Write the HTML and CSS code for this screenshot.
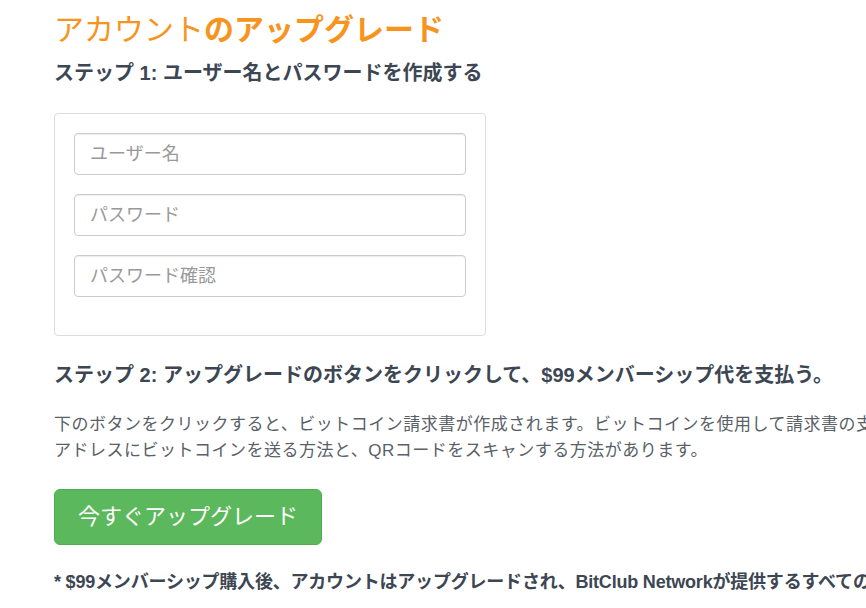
FILE: index.html
```html
<!DOCTYPE html>
<html lang="ja">
<head>
    <meta charset="UTF-8">
    <meta name="viewport" content="width=device-width, initial-scale=1.0">
    <title>アカウントのアップグレード</title>
    <link rel="stylesheet" href="styles.css">
</head>
<body>
    <div class="container">
        <h2 class="page-title">アカウント<b>のアップグレード</b></h2>

        <h4 class="step">ステップ 1: ユーザー名とパスワードを作成する</h4>
        <div class="panel">
            <input class="field" type="text" placeholder="ユーザー名">
            <input class="field" type="password" placeholder="パスワード">
            <input class="field" type="password" placeholder="パスワード確認">
        </div>

        <h4 class="step step-two">ステップ 2: アップグレードのボタンをクリックして、$99メンバーシップ代を支払う。</h4>
        <p class="info">下のボタンをクリックすると、ビットコイン請求書が作成されます。ビットコインを使用して請求書の支払いを行うには、表示された<br>アドレスにビットコインを送る方法と、QRコードをスキャンする方法があります。</p>

        <button class="upgrade">今すぐアップグレード</button>

        <p class="note">* $99メンバーシップ購入後、アカウントはアップグレードされ、BitClub Networkが提供するすべての製品とサービスをご利用いただけます。</p>
    </div>
</body>
</html>
```

FILE: styles.css
```css
html, body {
    margin: 0;
    padding: 0;
    background: #fff;
    overflow-x: hidden;
}
body {
    font-family: "Liberation Sans", "Noto Sans CJK JP", sans-serif;
    color: #3d4653;
}
.container {
    width: 1140px;
    padding: 0 54px;
    white-space: nowrap;
}
.page-title {
    margin: 12px 0 0;
    font-size: 30px;
    line-height: 36px;
    font-weight: normal;
    color: #f7941d;
}
.page-title b {
    font-weight: bold;
}
.step {
    margin: 13px 0 28px;
    font-size: 20px;
    line-height: 24px;
    font-weight: bold;
    color: #3d4653;
}
.step-two {
    margin: 27px 0 25px;
}
.panel {
    width: 392px;
    padding: 19px;
    border: 1px solid #dddddd;
    border-radius: 4px;
}
.field {
    display: block;
    box-sizing: border-box;
    width: 100%;
    height: 42px;
    margin: 0 0 19px;
    padding: 0 15px;
    border: 1px solid #cccccc;
    border-radius: 4px;
    font-family: "Liberation Sans", "Noto Sans CJK JP", sans-serif;
    font-size: 18px;
    color: #555;
    box-shadow: inset 0 1px 1px rgba(0, 0, 0, 0.075);
}
.field::placeholder {
    color: #999;
}
.info {
    margin: 0 0 25px;
    font-size: 17px;
    line-height: 26px;
    color: #5a5f68;
    letter-spacing: 0.5px;
}
.upgrade {
    display: block;
    height: 56px;
    padding: 0 23px;
    border: 1px solid #4cae4c;
    border-radius: 6px;
    background-color: #5cb85c;
    color: #fff;
    font-family: "Liberation Sans", "Noto Sans CJK JP", sans-serif;
    font-size: 22px;
    line-height: 30px;
    cursor: pointer;
}
.upgrade:hover {
    background-color: #449d44;
}
.note {
    margin: 26px 0 0;
    font-size: 18px;
    line-height: 22px;
    font-weight: bold;
    letter-spacing: -0.2px;
    color: #3d4653;
}
```
